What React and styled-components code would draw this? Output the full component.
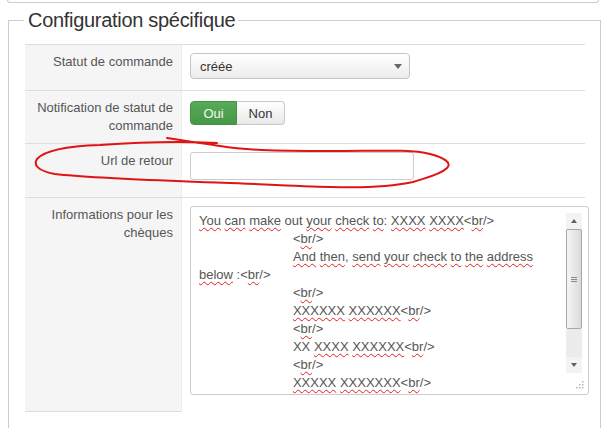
import React from 'react';
import styled, { createGlobalStyle } from 'styled-components';

const GlobalStyle = createGlobalStyle`
  *, *::before, *::after { box-sizing: border-box; }
  html, body { margin: 0; padding: 0; background: #fff; }
  body {
    font-family: "Liberation Sans", Arial, sans-serif;
    font-size: 13px;
    color: #555;
  }
`;

const INDENT = ' '.repeat(26);

// words wrapped in ~ ~ get the spellcheck squiggle
const chequeLines = [
  '~You~ ~can~ ~make~ out ~your~ ~check~ ~to~: ~XXXX~ ~XXXX~<~br~/>',
  INDENT + '<~br~/>',
  INDENT + '~And~ ~then~, ~send~ ~your~ ~check~ ~to~ ~the~ ~address~ ~below~ :<~br~/>',
  INDENT + '<~br~/>',
  INDENT + '~XXXXXX~ ~XXXXXX~<~br~/>',
  INDENT + '<~br~/>',
  INDENT + 'XX ~XXXX~ ~XXXXXX~<~br~/>',
  INDENT + '<~br~/>',
  INDENT + '~XXXXX~ ~XXXXXXX~<~br~/>',
];

const renderLine = (line) =>
  line.split(/(~[^~]+~)/).map((part, i) =>
    part.startsWith('~') ? <Miss key={i}>{part.slice(1, -1)}</Miss> : part
  );

const App = () => (
  <>
    <GlobalStyle />
    <Page>
      <PanelEdge />
      <Fieldset>
        <Legend>Configuration spécifique</Legend>
        <Table>
          <Row $h={46}>
            <Label>Statut de commande</Label>
            <Cell>
              <Select>
                <span>créée</span>
                <Caret />
              </Select>
            </Cell>
          </Row>
          <Row $h={53}>
            <Label>Notification de statut de commande</Label>
            <Cell>
              <Toggle>
                <ToggleBtn $on>Oui</ToggleBtn>
                <ToggleBtn>Non</ToggleBtn>
              </Toggle>
            </Cell>
          </Row>
          <Row $h={54}>
            <Label>Url de retour</Label>
            <Cell>
              <TextInput type="text" defaultValue="" />
            </Cell>
          </Row>
          <Row $h={215}>
            <Label $last>Informations pour les chèques</Label>
            <Cell>
              <TextArea>
                <TextBody>
                  {chequeLines.map((l, i) => (
                    <React.Fragment key={i}>
                      {renderLine(l)}
                      {'\n'}
                    </React.Fragment>
                  ))}
                </TextBody>
                <ScrollBar>
                  <ScrollBtn>
                    <Arrow $up />
                  </ScrollBtn>
                  <Thumb>
                    <Grip />
                  </Thumb>
                  <ScrollTrack />
                  <ScrollBtn>
                    <Arrow />
                  </ScrollBtn>
                </ScrollBar>
                <ResizeGrip viewBox="0 0 12 12">
                  {[
                    [9, 2], [6, 5], [9, 5], [3, 8], [6, 8], [9, 8],
                  ].map(([x, y]) => (
                    <rect key={`${x}-${y}`} x={x} y={y} width="1.5" height="1.5" fill="#b8b8b8" />
                  ))}
                </ResizeGrip>
              </TextArea>
            </Cell>
          </Row>
        </Table>
      </Fieldset>

      {/* hand-drawn red loop around the return url row */}
      <Scribble viewBox="0 0 609 428">
        <path
          d="M167,138 C185,141 200,143 220,146 C245,150 270,151 330,151 C380,151 410,149 430,154
             C445,158 452,163 447,168 C440,175 425,178 413,182 C390,187 360,188 330,187
             C290,186 240,183 200,182 C150,180 90,178 55,174 C38,171 33,165 37,159
             C45,150 70,146 100,145 C140,142 180,141 217,143"
          fill="none"
          stroke="#e01414"
          strokeWidth="2"
          strokeLinecap="round"
        />
      </Scribble>
    </Page>
  </>
);

const Page = styled.div`
  position: relative;
  width: 609px;
  height: 428px;
  overflow: hidden;
`;

const PanelEdge = styled.div`
  height: 3px;
  margin: 0 10px 0 7px;
  border: 1px solid #ccc;
  border-top: none;
  border-radius: 0 0 3px 3px;
`;

const Fieldset = styled.fieldset`
  margin: 5px 8px 0 8px;
  padding: 12px 15px 20px 16px;
  border: 1px solid #ccc;
  min-inline-size: 0;
`;

const Legend = styled.legend`
  padding: 0 3px 0 4px;
  margin-left: -1px;
  font-size: 20px;
  line-height: 24px;
  letter-spacing: -0.3px;
  color: #333;
`;

const Table = styled.div`
  width: 560px;
`;

const Row = styled.div`
  display: grid;
  grid-template-columns: 157px 1fr;
  height: ${(p) => p.$h}px;
  border-top: 1px solid #ddd;
`;

const Label = styled.div`
  background: #f5f5f5;
  padding: 8px 8px 0;
  text-align: right;
  line-height: 18px;
  color: #555;
  border-right: 1px solid #ececec;
  border-bottom: ${(p) => (p.$last ? '1px solid #ddd' : 'none')};
`;

const Cell = styled.div`
  padding: 8px 0 0 8px;
`;

const Select = styled.div`
  width: 220px;
  height: 26px;
  display: flex;
  align-items: center;
  justify-content: space-between;
  padding: 0 7px 0 9px;
  border: 1px solid #c4c4c4;
  border-radius: 4px;
  background: linear-gradient(#ffffff, #ececec);
  color: #333;
`;

const Caret = styled.span`
  width: 0;
  height: 0;
  border-left: 4px solid transparent;
  border-right: 4px solid transparent;
  border-top: 5px solid #666;
`;

const Toggle = styled.div`
  display: inline-flex;
  margin-top: 2px;
`;

const ToggleBtn = styled.span`
  display: flex;
  align-items: center;
  justify-content: center;
  width: ${(p) => (p.$on ? 47 : 48)}px;
  height: 24px;
  font-size: 13px;
  border: 1px solid ${(p) => (p.$on ? '#439343' : '#c8c8c8')};
  border-left-width: ${(p) => (p.$on ? 1 : 0)}px;
  border-radius: ${(p) => (p.$on ? '4px 0 0 4px' : '0 4px 4px 0')};
  background: ${(p) =>
    p.$on ? 'linear-gradient(#58aa58, #469846)' : 'linear-gradient(#ffffff, #e8e8e8)'};
  color: ${(p) => (p.$on ? '#f2faf2' : '#333')};
`;

const TextInput = styled.input`
  display: block;
  width: 224px;
  height: 28px;
  margin: 0;
  padding: 4px 6px;
  border: 1px solid #ccc;
  border-radius: 3px;
  background: #fff;
  font: inherit;
  outline: none;
`;

const TextArea = styled.div`
  position: relative;
  width: 399px;
  height: 189px;
  border: 1px solid #ccc;
  border-radius: 3px;
  background: #fff;
  overflow: hidden;
`;

const TextBody = styled.div`
  height: 100%;
  padding: 5px 34px 4px 8px;
  white-space: pre-wrap;
  line-height: 18px;
  font-size: 13px;
  color: #555;
  overflow: hidden;
`;

const Miss = styled.span`
  text-decoration: underline wavy #e02020;
  text-decoration-thickness: 1px;
  text-decoration-skip-ink: none;
  text-underline-offset: 2px;
`;

const ScrollBar = styled.div`
  position: absolute;
  top: 6px;
  right: 6px;
  bottom: 21px;
  width: 16px;
  display: flex;
  flex-direction: column;
  background: #f0f0f0;
`;

const ScrollBtn = styled.div`
  height: 16px;
  display: flex;
  align-items: center;
  justify-content: center;
  background: #f3f3f3;
`;

const Arrow = styled.span`
  width: 0;
  height: 0;
  border-left: 3px solid transparent;
  border-right: 3px solid transparent;
  ${(p) => (p.$up ? 'border-bottom: 4px solid #606060;' : 'border-top: 4px solid #606060;')}
`;

const Thumb = styled.div`
  height: 100px;
  display: flex;
  align-items: center;
  justify-content: center;
  border: 1px solid #a8a8a8;
  border-radius: 2px;
  background: linear-gradient(to right, #f6f6f6, #dadada);
`;

const Grip = styled.span`
  width: 6px;
  height: 5px;
  border-top: 1px solid #8a8a8a;
  border-bottom: 1px solid #8a8a8a;
  background: linear-gradient(transparent 1px, #8a8a8a 1px, #8a8a8a 2px, transparent 2px);
`;

const ScrollTrack = styled.div`
  flex: 1;
  background: #ececec;
`;

const ResizeGrip = styled.svg`
  position: absolute;
  right: 3px;
  bottom: 3px;
  width: 12px;
  height: 12px;
`;

const Scribble = styled.svg`
  position: absolute;
  inset: 0;
  width: 609px;
  height: 428px;
  pointer-events: none;
`;

export default App;
